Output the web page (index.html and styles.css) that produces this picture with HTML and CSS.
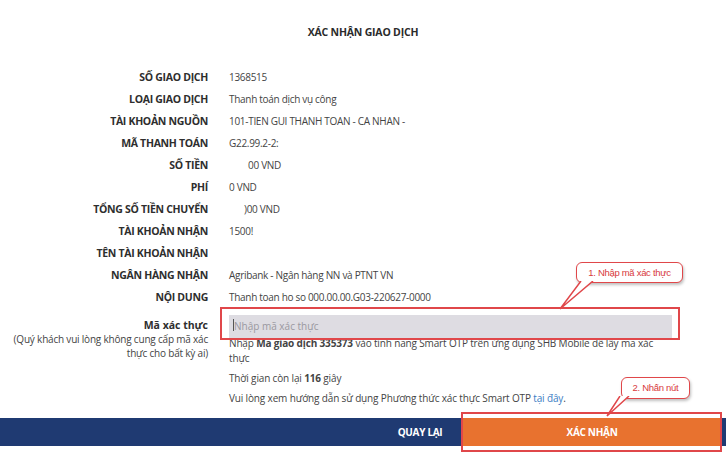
FILE: index.html
```html
<!DOCTYPE html>
<html lang="vi">
<head>
    <meta charset="UTF-8">
    <title>Xác nhận giao dịch</title>
    <link rel="stylesheet" href="styles.css">
</head>
<body>
    <div class="page">
        <h1 class="title">XÁC NHẬN GIAO DỊCH</h1>

        <div class="info">
            <div class="lbl">SỐ GIAO DỊCH</div><div class="val">1368515</div>
            <div class="lbl">LOẠI GIAO DỊCH</div><div class="val">Thanh toán dịch vụ công</div>
            <div class="lbl">TÀI KHOẢN NGUỒN</div><div class="val">101-TIEN GUI THANH TOAN - CA NHAN -</div>
            <div class="lbl">MÃ THANH TOÁN</div><div class="val">G22.99.2-2:</div>
            <div class="lbl">SỐ TIỀN</div><div class="val hidden-start">00 VND</div>
            <div class="lbl">PHÍ</div><div class="val">0 VND</div>
            <div class="lbl">TỔNG SỐ TIỀN CHUYỂN</div><div class="val hidden-start2">)00 VND</div>
            <div class="lbl">TÀI KHOẢN NHẬN</div><div class="val">1500!</div>
            <div class="lbl">TÊN TÀI KHOẢN NHẬN</div><div class="val"></div>
            <div class="lbl">NGÂN HÀNG NHẬN</div><div class="val">Agribank - Ngân hàng NN và PTNT VN</div>
            <div class="lbl">NỘI DUNG</div><div class="val">Thanh toan ho so 000.00.00.G03-220627-0000</div>
        </div>

        <div class="otp">
            <div class="otp-label">
                <div class="otp-title">Mã xác thực</div>
                <div class="otp-note">(Quý khách vui lòng không cung cấp mã xác thực cho bất kỳ ai)</div>
            </div>
            <div class="otp-body">
                <div class="otp-field">
                    <input type="text" class="otp-input" placeholder="Nhập mã xác thực">
                    <span class="caret"></span>
                    <span class="mark mark-input"></span>
                </div>
                <p class="otp-text">Nhập <b>Mã giao dịch 335373</b> vào tính năng Smart OTP trên ứng dụng SHB Mobile để lấy mã xác thực</p>
                <p class="otp-time">Thời gian còn lại <b>116</b> giây</p>
                <p class="otp-help">Vui lòng xem hướng dẫn sử dụng Phương thức xác thực Smart OTP <a href="#">tại đây</a>.</p>
            </div>
        </div>

        <div class="actions">
            <button class="btn-back">QUAY LẠI</button>
            <button class="btn-ok">XÁC NHẬN<span class="mark mark-btn"></span></button>
        </div>

        <!-- chu thich huong dan -->
        <div class="callout callout-1">
            <span>1. Nhập mã xác thực</span>
            <svg class="tail" width="40" height="30" viewBox="0 0 40 30">
                <path d="M22 0 L1 28 L34 0" fill="#fff" stroke="#e0474a" stroke-width="1.5"/>
            </svg>
        </div>
        <div class="callout callout-2">
            <span>2. Nhấn nút</span>
            <svg class="tail" width="30" height="22" viewBox="0 0 30 22">
                <path d="M14 0 L1 20 L23 0" fill="#fff" stroke="#e0474a" stroke-width="1.5"/>
            </svg>
        </div>
    </div>
</body>
</html>
```

FILE: styles.css
```css
body {
    margin: 0;
    font-family: 'Open Sans', 'Liberation Sans', sans-serif;
    background-color: #ffffff;
    color: #3a3a3a;
}

.page {
    position: relative;
    width: 726px;
    height: 456px;
    overflow: hidden;
}

.title {
    margin: 0;
    padding-top: 25px;
    text-align: center;
    font-size: 10.5px;
    font-weight: 700;
    letter-spacing: -0.2px;
    color: #2b2b2b;
    line-height: 14px;
}

.info {
    display: grid;
    grid-template-columns: 208px 1fr;
    column-gap: 21px;
    margin-top: 27px;
    grid-auto-rows: 22px;
    align-items: center;
}

.lbl {
    text-align: right;
    font-size: 10.5px;
    font-weight: 700;
    letter-spacing: -0.3px;
    color: #2e2e2e;
}

.val {
    font-size: 10px;
    letter-spacing: -0.3px;
    color: #444;
}

.hidden-start {
    padding-left: 19px;
}

.hidden-start2 {
    padding-left: 15px;
}

.otp {
    display: grid;
    grid-template-columns: 208px 443px;
    column-gap: 21px;
    margin-top: 5px;
}

.otp-label {
    text-align: right;
    padding-top: 5px;
}

.otp-title {
    font-size: 10.5px;
    font-weight: 700;
    color: #2e2e2e;
    line-height: 14px;
}

.otp-note {
    font-size: 10px;
    letter-spacing: -0.2px;
    line-height: 14px;
    color: #444;
    padding-left: 10px;
}

.otp-field {
    position: relative;
    height: 23px;
}

.otp-input {
    width: 100%;
    height: 23px;
    box-sizing: border-box;
    border: none;
    background-color: #dedce2;
    padding: 0 5px;
    font-family: inherit;
    font-size: 10px;
    outline: none;
}

.otp-input::placeholder {
    color: #9a98a0;
}

.caret {
    position: absolute;
    left: 4px;
    top: 6px;
    width: 1px;
    height: 12px;
    background-color: #555;
}

.mark {
    position: absolute;
    border: 2px solid #e0474a;
    pointer-events: none;
}

.mark-input {
    left: -9px;
    top: -6px;
    right: -8px;
    bottom: -4px;
}

.otp-body p {
    margin: 0;
    font-size: 10px;
    letter-spacing: -0.15px;
    color: #444;
    line-height: 15px;
}

.otp-text {
    padding-right: 8px;
}

.otp-time {
    margin-top: 5px !important;
}

.otp-help {
    margin-top: 5px !important;
}

.otp-help a {
    color: #3a7dc4;
    text-decoration: none;
}

.actions {
    position: absolute;
    left: 0;
    right: 0;
    top: 418px;
    height: 28px;
    display: flex;
    justify-content: flex-end;
    background-color: #1f3a72;
    padding-right: 5px;
}

.actions button {
    border: none;
    font-family: inherit;
    font-size: 10px;
    font-weight: 700;
    letter-spacing: -0.3px;
    color: #ffffff;
    height: 28px;
    cursor: pointer;
}

.btn-back {
    width: 86px;
    background: transparent;
}

.btn-ok {
    position: relative;
    width: 258px;
    background-color: #e8722f;
}

.mark-btn {
    left: -2px;
    top: -6px;
    right: -1px;
    bottom: -6px;
}

.callout {
    position: absolute;
    border: 1.5px solid #e0474a;
    border-radius: 6px;
    background-color: #fff;
    box-shadow: 1px 2px 3px rgba(0, 0, 0, 0.25);
    font-family: 'Liberation Sans', Arial, sans-serif;
    font-size: 9.5px;
    letter-spacing: -0.3px;
    color: #d8393c;
    text-align: center;
    line-height: 19px;
}

.callout span {
    position: relative;
    z-index: 1;
}

.callout .tail {
    position: absolute;
    top: 18px;
}

.callout-1 {
    left: 576px;
    top: 262px;
    width: 105px;
    height: 19px;
}

.callout-1 .tail {
    left: -18px;
}

.callout-2 {
    left: 621px;
    top: 377px;
    width: 67px;
    height: 20px;
}

.callout-2 .tail {
    left: -16px;
}
```
